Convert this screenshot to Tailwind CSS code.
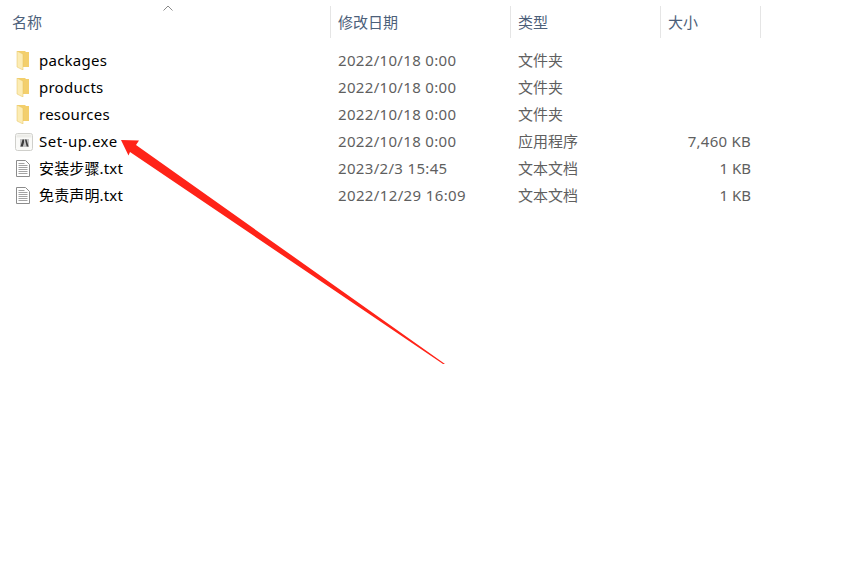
<!DOCTYPE html>
<html lang="zh-CN">
<head>
  <meta charset="UTF-8">
  <title>文件列表</title>
  <script src="https://cdn.jsdelivr.net/npm/@tailwindcss/browser@4"></script>
</head>
<body class="relative w-[866px] h-[570px] overflow-hidden bg-white font-['Noto_Sans','Noto_Sans_CJK_SC',sans-serif] text-[15px]">

<!-- HEADER -->
<div class="relative flex pt-[6px] h-[47px] text-[#4c607a]">
  <svg class="absolute left-[163px] top-[5px]" width="10" height="6" viewBox="0 0 10 6" fill="none" stroke="#8a8a8a"><path d="M0.5 5.5L5 1l4.500 4.500"/></svg>
  <div class="w-[330px] h-[32px] pl-[12px] leading-[32px]">名称</div>
  <div class="w-[180px] h-[32px] pl-[7px] leading-[32px] border-l border-[#e5e5e5]">修改日期</div>
  <div class="w-[150px] h-[32px] pl-[7px] leading-[32px] border-l border-[#e5e5e5]">类型</div>
  <div class="w-[101px] h-[32px] pl-[7px] leading-[32px] border-x border-[#e5e5e5]">大小</div>
</div>

<!-- ROWS -->
<div class="flex flex-col">
  <div class="flex items-center h-[27px]">
    <div class="flex items-center w-[330px] pl-[16px] gap-[10px] text-black">
      <svg width="13" height="19" viewBox="0 0 13 19"><path d="M1 0h8l1 1h3v15H1z" fill="#f3cf6c"/><path d="M1 0l6 3v16l-6-3z" fill="#fcecb4" stroke="#e6c35c" stroke-width=".5"/></svg>
      <span class="tracking-[0.25px]">packages</span>
    </div>
    <div class="w-[180px] pl-[8px] text-[#5f5f5f] tracking-[0.33px]">2022/10/18 0:00</div>
    <div class="w-[150px] pl-[8px] text-[#5f5f5f]">文件夹</div>
    <div class="w-[91px] text-right text-[#5f5f5f]"></div>
  </div>
  <div class="flex items-center h-[27px]">
    <div class="flex items-center w-[330px] pl-[16px] gap-[10px] text-black">
      <svg width="13" height="19" viewBox="0 0 13 19"><path d="M1 0h8l1 1h3v15H1z" fill="#f3cf6c"/><path d="M1 0l6 3v16l-6-3z" fill="#fcecb4" stroke="#e6c35c" stroke-width=".5"/></svg>
      <span class="tracking-[0.25px]">products</span>
    </div>
    <div class="w-[180px] pl-[8px] text-[#5f5f5f] tracking-[0.33px]">2022/10/18 0:00</div>
    <div class="w-[150px] pl-[8px] text-[#5f5f5f]">文件夹</div>
    <div class="w-[91px] text-right text-[#5f5f5f]"></div>
  </div>
  <div class="flex items-center h-[27px]">
    <div class="flex items-center w-[330px] pl-[16px] gap-[10px] text-black">
      <svg width="13" height="19" viewBox="0 0 13 19"><path d="M1 0h8l1 1h3v15H1z" fill="#f3cf6c"/><path d="M1 0l6 3v16l-6-3z" fill="#fcecb4" stroke="#e6c35c" stroke-width=".5"/></svg>
      <span class="tracking-[0.25px]">resources</span>
    </div>
    <div class="w-[180px] pl-[8px] text-[#5f5f5f] tracking-[0.33px]">2022/10/18 0:00</div>
    <div class="w-[150px] pl-[8px] text-[#5f5f5f]">文件夹</div>
    <div class="w-[91px] text-right text-[#5f5f5f]"></div>
  </div>
  <div class="flex items-center h-[27px]">
    <div class="flex items-center w-[330px] pl-[15px] gap-[6px] text-black">
      <svg width="18" height="18" viewBox="0 0 18 18"><rect x=".5" y=".5" width="17" height="17" rx="2" fill="#fafaf8" stroke="#cfcfcb"/><rect x="1.500" y="1.500" width="15" height="3" fill="#ececE8"/><rect x="5" y="6" width="9" height="8" fill="#c4c4c4"/><path d="M5.500 13.500l2-7h1.500v3l-1.200 4zM13.500 13.500l-2-7h-1.500l1.700 7z" fill="#3c3c3c"/></svg>
      <span class="tracking-[0.5px]">Set-up.exe</span>
    </div>
    <div class="w-[180px] pl-[8px] text-[#5f5f5f] tracking-[0.33px]">2022/10/18 0:00</div>
    <div class="w-[150px] pl-[8px] text-[#5f5f5f]">应用程序</div>
    <div class="w-[91px] text-right text-[#5f5f5f] tracking-[0.25px]">7,460 KB</div>
  </div>
  <div class="flex items-center h-[27px]">
    <div class="flex items-center w-[330px] pl-[16px] gap-[9px] text-black">
      <svg width="14" height="17" viewBox="0 0 14 17" fill="none"><path d="M.5.500h9l4 4v12H.500z" fill="#fff" stroke="#8c8c8c"/><path d="M2.500 3.500h6M2.500 5.500h9M2.500 7.500h9M2.500 9.500h9M2.500 11.500h9M2.500 13.500h9" stroke="#a3a3a3"/></svg>
      <span class="tracking-[0.15px]">安装步骤.txt</span>
    </div>
    <div class="w-[180px] pl-[8px] text-[#5f5f5f] tracking-[0.33px]">2023/2/3 15:45</div>
    <div class="w-[150px] pl-[8px] text-[#5f5f5f]">文本文档</div>
    <div class="w-[91px] text-right text-[#5f5f5f]">1 KB</div>
  </div>
  <div class="flex items-center h-[27px]">
    <div class="flex items-center w-[330px] pl-[16px] gap-[9px] text-black">
      <svg width="14" height="17" viewBox="0 0 14 17" fill="none"><path d="M.5.500h9l4 4v12H.500z" fill="#fff" stroke="#8c8c8c"/><path d="M2.500 3.500h6M2.500 5.500h9M2.500 7.500h9M2.500 9.500h9M2.500 11.500h9M2.500 13.500h9" stroke="#a3a3a3"/></svg>
      <span class="tracking-[0.15px]">免责声明.txt</span>
    </div>
    <div class="w-[180px] pl-[8px] text-[#5f5f5f] tracking-[0.37px]">2022/12/29 16:09</div>
    <div class="w-[150px] pl-[8px] text-[#5f5f5f]">文本文档</div>
    <div class="w-[91px] text-right text-[#5f5f5f]">1 KB</div>
  </div>
</div>

<!-- ARROW -->
<svg class="absolute left-0 top-0" width="866" height="570" viewBox="0 0 866 570"><polygon points="121,140 139,140.500 136,145 445,364 443,364 130,152 128.500,155.500" fill="#ff2318"/></svg>

</body>
</html>
